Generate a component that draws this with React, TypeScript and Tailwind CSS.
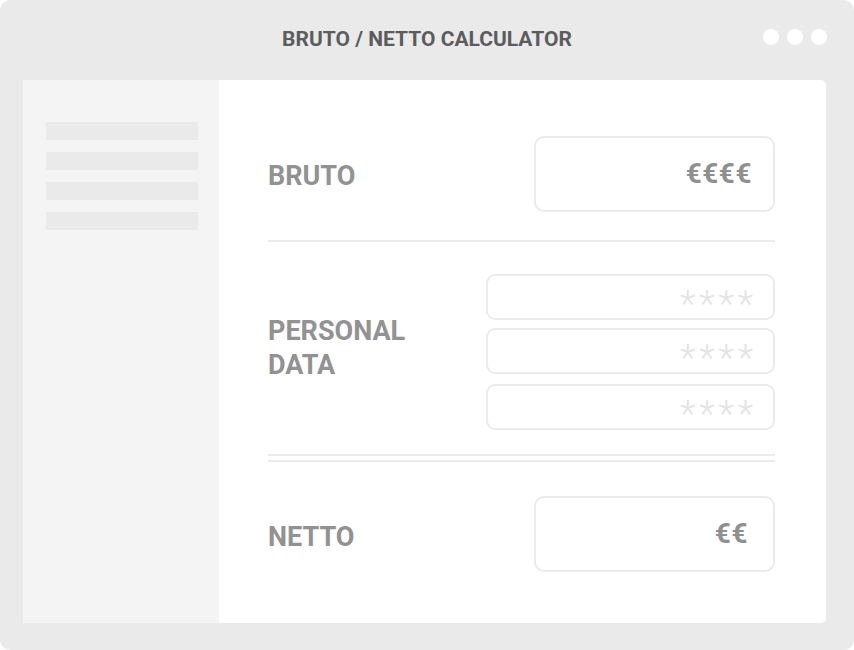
const font = { fontFamily: "Roboto, 'Liberation Sans', sans-serif" };

function Field({ value, className = "" }: { value: string; className?: string }) {
  return (
    <div
      className={`flex items-center justify-end rounded-[10px] border-2 border-[#ebebeb] bg-white ${className}`}
    >
      <span className="text-[28px] font-bold leading-none tracking-[0.5px] text-[#8f8f8f]">{value}</span>
    </div>
  );
}

function Masked({ className = "" }: { className?: string }) {
  return (
    <div
      className={`flex h-[46px] items-center justify-end rounded-[9px] border-2 border-[#ebebeb] bg-white pr-[16px] ${className}`}
    >
      <span className="mt-[14px] text-[36px] font-light leading-none tracking-[4px] text-[#e3e3e3]">****</span>
    </div>
  );
}

export default function App() {
  return (
    <div className="h-[650px] w-[854px] bg-white" style={font}>
      <div className="flex h-full w-full flex-col rounded-[10px] bg-[#eaeaea]">
        <header className="relative flex h-[80px] shrink-0 items-center justify-center">
          <h1 className="text-[21px] font-bold tracking-[0px] text-[#5c5c5c]">BRUTO / NETTO CALCULATOR</h1>
          <div className="absolute right-[27px] top-[29px] flex gap-[8px]">
            <span className="h-[16px] w-[16px] rounded-full bg-white" />
            <span className="h-[16px] w-[16px] rounded-full bg-white" />
            <span className="h-[16px] w-[16px] rounded-full bg-white" />
          </div>
        </header>

        <div className="mb-[27px] ml-[23px] mr-[28px] flex flex-1 overflow-hidden rounded-r-[5px] bg-white">
          <aside className="flex w-[196px] shrink-0 flex-col gap-[12px] bg-[#f4f4f4] pl-[23px] pt-[42px]">
            <div className="h-[18px] w-[152px] bg-[#eaeaea]" />
            <div className="h-[18px] w-[152px] bg-[#eaeaea]" />
            <div className="h-[18px] w-[152px] bg-[#eaeaea]" />
            <div className="h-[18px] w-[152px] bg-[#eaeaea]" />
          </aside>

          <main className="flex flex-1 flex-col pl-[49px] pr-[51px] pt-[56px] text-[#929292]">
            <div className="flex h-[76px] items-center justify-between">
              <span className="mt-[4px] text-[27px] font-bold">BRUTO</span>
              <Field value="€€€€" className="h-[76px] w-[241px] pr-[21px]" />
            </div>

            <div className="mt-[28px] h-[2px] bg-[#ebebeb]" />

            <div className="mt-[32px] flex items-center justify-between">
              <span className="-mt-[8px] text-[27px] font-bold leading-[34px]">
                PERSONAL
                <br />
                DATA
              </span>
              <div className="flex w-[289px] flex-col">
                <Masked />
                <Masked className="mt-[8px]" />
                <Masked className="mt-[10px]" />
              </div>
            </div>

            <div className="mt-[24px] h-[2px] bg-[#ebebeb]" />
            <div className="mt-[4px] h-[2px] bg-[#ebebeb]" />

            <div className="mt-[34px] flex h-[76px] items-center justify-between">
              <span className="mt-[6px] text-[27px] font-bold">NETTO</span>
              <Field value="€€" className="h-[76px] w-[241px] pr-[25px]" />
            </div>
          </main>
        </div>
      </div>
    </div>
  );
}
